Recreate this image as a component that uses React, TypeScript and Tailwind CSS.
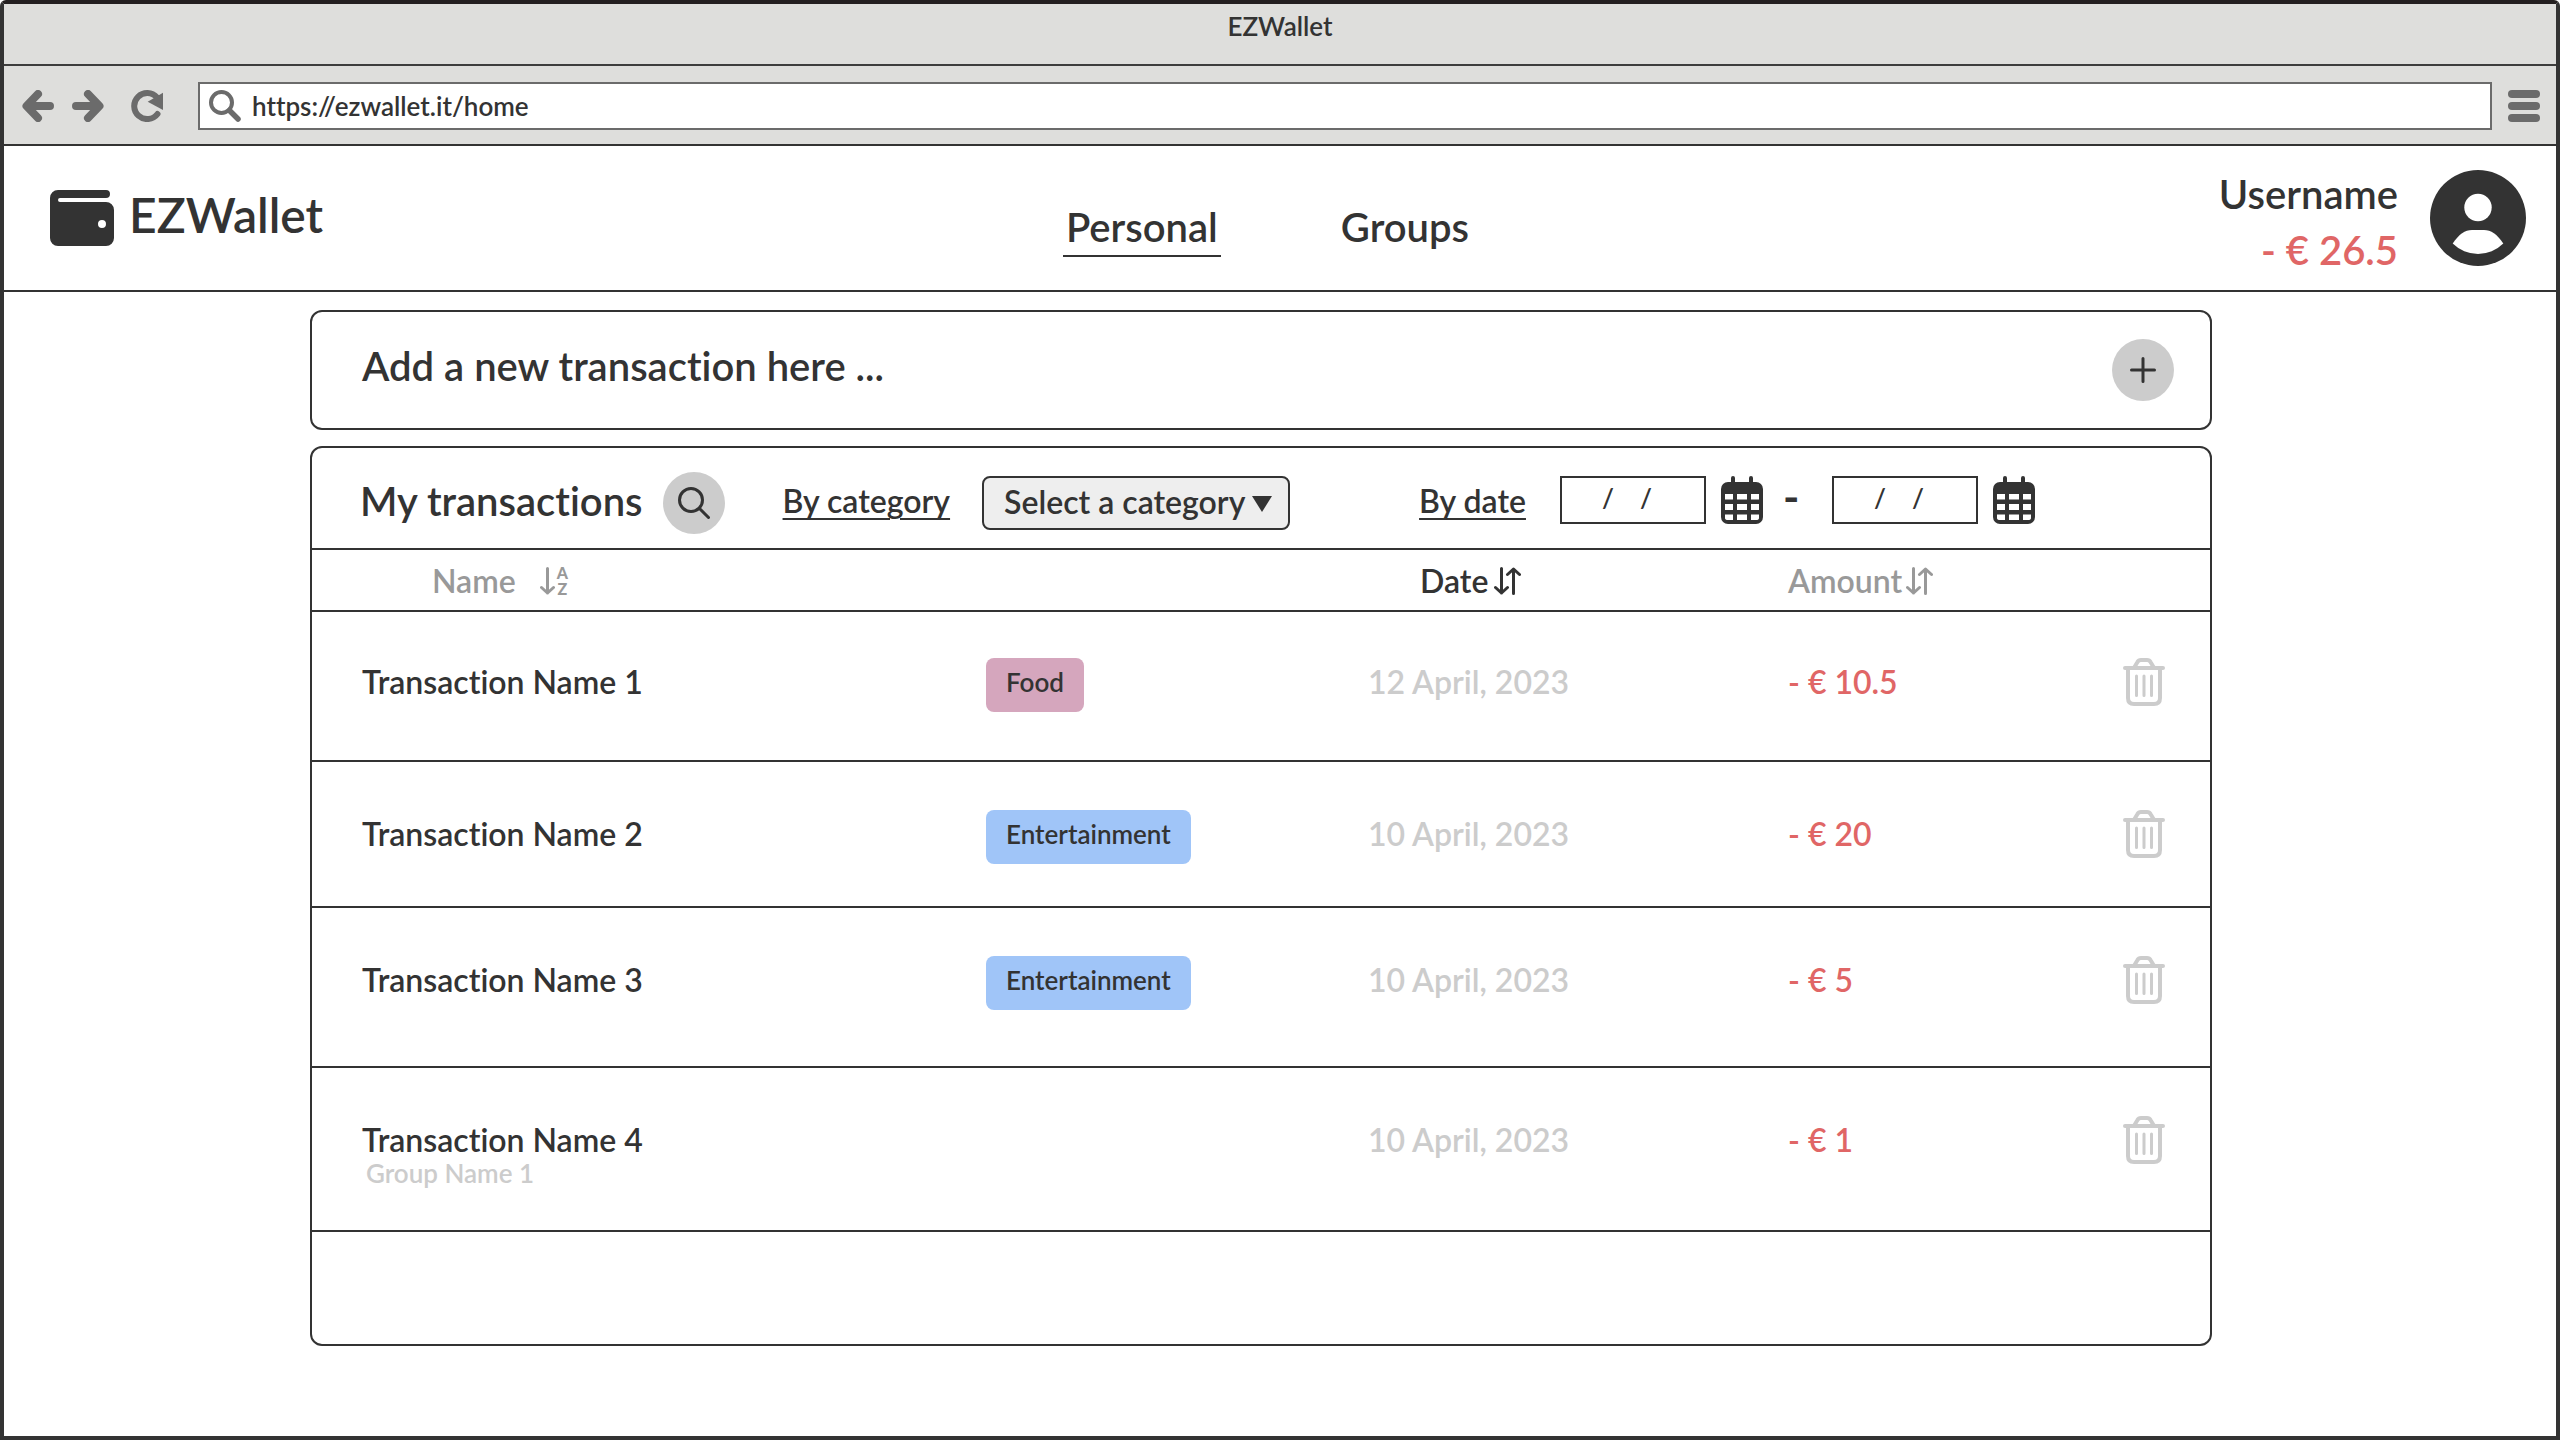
import React from 'react';

type Transaction = {
  name: string;
  group?: string;
  category?: string;
  tone?: string;
  date: string;
  amount: string;
  cell: string;
};

const transactions: Transaction[] = [
  { name: 'Transaction Name 1', category: 'Food', tone: 'bg-[#d5a6bd]', date: '12 April, 2023', amount: '- € 10.5', cell: 'h-[150px] pt-[46px]' },
  { name: 'Transaction Name 2', category: 'Entertainment', tone: 'bg-[#a0c5f8]', date: '10 April, 2023', amount: '- € 20', cell: 'h-[146px] pt-12' },
  { name: 'Transaction Name 3', category: 'Entertainment', tone: 'bg-[#a0c5f8]', date: '10 April, 2023', amount: '- € 5', cell: 'h-[160px] pt-12' },
  { name: 'Transaction Name 4', group: 'Group Name 1', date: '10 April, 2023', amount: '- € 1', cell: 'h-[164px] pt-12' },
];

function BackIcon() {
  return (
    <svg className="size-8" viewBox="0 0 32 32" fill="none" stroke="currentColor" strokeWidth="8" strokeLinecap="round" strokeLinejoin="round" aria-hidden="true">
      <path d="M5 16H28M16 4 4.500 16 16 28" />
    </svg>
  );
}

function ForwardIcon() {
  return (
    <svg className="size-8" viewBox="0 0 32 32" fill="none" stroke="currentColor" strokeWidth="8" strokeLinecap="round" strokeLinejoin="round" aria-hidden="true">
      <path d="M4 16H27M16 4 27.500 16 16 28" />
    </svg>
  );
}

function ReloadIcon() {
  return (
    <svg className="size-8" viewBox="0 0 32 32" aria-hidden="true">
      <path d="M26 7.500A13 13 0 1 0 26.500 24" fill="none" stroke="currentColor" strokeWidth="6" strokeLinecap="round" />
      <path d="M32 2.700V20L16.700 11.700Z" fill="currentColor" />
    </svg>
  );
}

function AddressSearchIcon() {
  return (
    <svg className="size-8 shrink-0 text-[#6b6b6b]" viewBox="0 0 32 32" fill="none" stroke="currentColor" strokeLinecap="round" aria-hidden="true">
      <circle cx="12.500" cy="12.500" r="10.500" strokeWidth="4" />
      <path d="M20.500 20.500 29 29" strokeWidth="5.500" />
    </svg>
  );
}

function MenuIcon() {
  return (
    <svg className="size-8" viewBox="0 0 32 32" fill="currentColor" aria-hidden="true">
      <rect width="32" height="8" rx="4" />
      <rect y="12" width="32" height="8" rx="4" />
      <rect y="24" width="32" height="8" rx="4" />
    </svg>
  );
}

function WalletIcon() {
  return (
    <svg className="h-14 w-16" viewBox="0 0 64 56" fill="currentColor" fillRule="evenodd" aria-hidden="true">
      <path d="M8 0H56a4 4 0 0 1 0 8H10a2 2 0 0 0 0 4H56a8 8 0 0 1 8 8V48a8 8 0 0 1-8 8H8a8 8 0 0 1-8-8V8a8 8 0 0 1 8-8ZM52 30a4 4 0 1 0 0 8 4 4 0 0 0 0-8Z" />
    </svg>
  );
}

function AvatarIcon() {
  return (
    <svg className="size-24" viewBox="0 0 96 96" aria-hidden="true">
      <circle cx="48" cy="48" r="48" fill="#333333" />
      <circle cx="48" cy="37.500" r="13.700" fill="white" />
      <path d="M22.700 73.500C29 64 35 60 42 60H54C61 60 67 64 73.300 73.500A36 36 0 0 1 22.700 73.500Z" fill="white" />
    </svg>
  );
}

function PlusIcon() {
  return (
    <svg className="size-[26px]" viewBox="0 0 26 26" stroke="currentColor" strokeWidth="3" strokeLinecap="round" aria-hidden="true">
      <path d="M13 1.500V24.500M1.500 13H24.500" />
    </svg>
  );
}

function SearchIcon() {
  return (
    <svg className="size-8" viewBox="0 0 32 32" fill="none" stroke="currentColor" strokeWidth="3" strokeLinecap="round" aria-hidden="true">
      <circle cx="13" cy="13" r="11.500" />
      <path d="M21.500 21.500 30.500 30.500" />
    </svg>
  );
}

function CalendarIcon() {
  return (
    <svg className="h-12 w-[42px]" viewBox="0 0 42 48" aria-hidden="true">
      <path d="M12 2V10M30 2V10" stroke="currentColor" strokeWidth="4" strokeLinecap="round" />
      <rect y="6" width="42" height="42" rx="7" fill="currentColor" />
      <path
        d="M4 18h8v5.500H4zM16 18h10v5.500H16zM30 18h8v5.500h-8zM4 28h8v6H4zM16 28h10v6H16zM30 28h8v6h-8zM4 38.500h8v5.500H7q-3 0-3-2zM16 38.500h10v5.500H16zM30 38.500h8v3.500q0 2-3 2h-5z"
        fill="white"
      />
    </svg>
  );
}

function SortIcon() {
  return (
    <svg className="h-7 w-[27px]" viewBox="0 0 27 28" fill="none" stroke="currentColor" strokeWidth="3" strokeLinecap="round" strokeLinejoin="round" aria-hidden="true">
      <path d="M7.500 1.500V26M1.500 20.500 7.500 26 13.500 20.500M19.500 26.500V2M13.500 7.500 19.500 2 25.500 7.500" />
    </svg>
  );
}

function SortAlphaIcon() {
  return (
    <span className="flex items-center gap-0.5" aria-hidden="true">
      <svg className="h-7 w-[15px]" viewBox="0 0 15 28" fill="none" stroke="currentColor" strokeWidth="3" strokeLinecap="round" strokeLinejoin="round">
        <path d="M7.500 1.500V26M1.500 20.500 7.500 26 13.500 20.500" />
      </svg>
      <span className="flex flex-col items-center text-base leading-4 font-black">
        <span>A</span>
        <span>Z</span>
      </span>
    </span>
  );
}

function TrashIcon() {
  return (
    <svg className="h-12 w-[42px]" viewBox="0 0 42 48" fill="none" stroke="currentColor" strokeWidth="4" strokeLinecap="round" strokeLinejoin="round" aria-hidden="true">
      <path d="M2 10H40M11.500 9 14.500 4Q15.500 2 18 2H24Q26.500 2 27.500 4L30.500 9M5 10V40Q5 46 11 46H31Q37 46 37 40V10" />
      <path d="M13.500 18V37.500M21 18V37.500M28.500 18V37.500" strokeWidth="3" />
    </svg>
  );
}

function DateField({ id, label }: { id: string; label: string }) {
  return (
    <div className="flex items-center gap-[15px]">
      <input
        id={id}
        type="text"
        aria-label={label}
        defaultValue="/    /"
        className="h-12 w-[146px] border-2 border-[#333333] bg-white pr-3 pb-1 text-center text-[26px] outline-none"
      />
      <button type="button" aria-label={`Choose ${label}`}>
        <CalendarIcon />
      </button>
    </div>
  );
}

function BrowserBar() {
  return (
    <div className="bg-[#dededc]">
      <div className="h-[62px] border-b-2 border-[#3d3d3d] pt-1.5 text-center text-[26px] leading-8">EZWallet</div>
      <div className="flex h-20 items-center border-b-2 border-[#333333] pt-0.5 pr-4 pl-[18px] text-[#6b6b6b]">
        <button type="button" aria-label="Back"><BackIcon /></button>
        <button type="button" aria-label="Forward" className="ml-[18px]"><ForwardIcon /></button>
        <button type="button" aria-label="Reload" className="ml-[27px]"><ReloadIcon /></button>
        <div className="mr-4 ml-[35px] flex h-12 flex-1 items-center gap-[11px] border-2 border-[#6b6b6b] bg-white pl-[9px]">
          <AddressSearchIcon />
          <input
            type="text"
            aria-label="Address"
            defaultValue="https://ezwallet.it/home"
            className="min-w-0 flex-1 bg-transparent text-[26px] leading-8 text-[#333333] outline-none"
          />
        </div>
        <button type="button" aria-label="Menu"><MenuIcon /></button>
      </div>
    </div>
  );
}

function SiteHeader() {
  return (
    <header className="grid h-[146px] grid-cols-[1fr_auto_1fr] items-center border-b-2 border-[#333333] pr-[30px] pl-[46px]">
      <div className="flex items-center gap-[15px]">
        <WalletIcon />
        <h1 className="pb-1.5 text-5xl">EZWallet</h1>
      </div>
      <nav className="mr-11 flex gap-[120px] pt-6 text-[40px] leading-12">
        <a href="#personal" aria-current="page" className="border-b-2 border-[#333333] px-[3px] pb-1">Personal</a>
        <a href="#groups" className="border-b-2 border-transparent pb-1">Groups</a>
      </nav>
      <div className="flex items-center justify-end gap-8">
        <div className="pt-2 text-right text-[40px] leading-14">
          <p>Username</p>
          <p className="text-[#e06666]">- € 26.5</p>
        </div>
        <button type="button" aria-label="Account"><AvatarIcon /></button>
      </div>
    </header>
  );
}

function FilterBar() {
  return (
    <div className="flex h-[102px] items-center border-b-2 border-[#333333] pt-2.5 pl-12">
      <h2 className="pb-1 text-[40px] leading-12">My transactions</h2>
      <button type="button" aria-label="Search" className="ml-5 flex size-[62px] items-center justify-center rounded-full bg-[#cccccc]">
        <SearchIcon />
      </button>
      <label htmlFor="category" className="ml-[58px] pb-1 text-[32px] underline decoration-2 underline-offset-[5px]">By category</label>
      <div className="relative ml-8">
        <select
          id="category"
          defaultValue="all"
          className="h-[54px] w-[308px] appearance-none rounded-lg border-2 border-[#333333] bg-[#eeeeee] pb-1 pl-5 text-[32px] outline-none"
        >
          <option value="all">Select a category</option>
          <option value="food">Food</option>
          <option value="entertainment">Entertainment</option>
        </select>
        <svg className="pointer-events-none absolute top-5 right-[18px] h-4 w-5" viewBox="0 0 20 16" fill="currentColor" aria-hidden="true">
          <path d="M0 0H20L10 16Z" />
        </svg>
      </div>
      <label htmlFor="from" className="ml-[129px] pb-1 text-[32px] underline decoration-2 underline-offset-[5px]">By date</label>
      <div className="ml-[34px] flex items-center pb-1.5">
        <DateField id="from" label="start date" />
        <span className="mx-5 w-[29px] pb-2 text-[44px] leading-9 font-bold">-</span>
        <DateField id="to" label="end date" />
      </div>
    </div>
  );
}

function TransactionTable() {
  return (
    <table className="w-full table-fixed border-separate border-spacing-0 text-left text-[32px]">
      <colgroup>
        <col />
        <col className="w-[380px]" />
        <col className="w-[420px]" />
        <col className="w-[334px]" />
        <col className="w-[90px]" />
      </colgroup>
      <thead>
        <tr className="leading-10">
          <th scope="col" className="h-[62px] border-b-2 border-[#333333] p-0 pt-0.5 pl-[120px] font-semibold text-[#999999]">
            <button type="button" className="flex items-center gap-6">Name<SortAlphaIcon /></button>
          </th>
          <th scope="col" aria-label="Category" className="border-b-2 border-[#333333] p-0" />
          <th scope="col" className="border-b-2 border-[#333333] p-0 pt-0.5 pl-[54px] font-semibold">
            <button type="button" className="flex items-center gap-1.5">Date<SortIcon /></button>
          </th>
          <th scope="col" className="border-b-2 border-[#333333] p-0 pt-0.5 pl-0.5 font-semibold text-[#999999]">
            <button type="button" className="flex items-center gap-1">Amount<SortIcon /></button>
          </th>
          <th scope="col" aria-label="Actions" className="border-b-2 border-[#333333] p-0" />
        </tr>
      </thead>
      <tbody>
        {transactions.map((t) => (
          <tr key={t.name} className="align-top leading-12">
            <td className={`border-b-2 border-[#333333] pl-[50px] ${t.cell}`}>
              <p>{t.name}</p>
              {t.group && <p className="pl-1 text-[26px] leading-[18px] text-[#cccccc]">{t.group}</p>}
            </td>
            <td className={`border-b-2 border-[#333333] ${t.cell}`}>
              {t.category && (
                <span className={`flex h-[54px] w-fit items-center rounded-lg px-5 pb-1.5 text-[26px] ${t.tone}`}>{t.category}</span>
              )}
            </td>
            <td className={`border-b-2 border-[#333333] pl-0.5 text-[#cccccc] ${t.cell}`}>{t.date}</td>
            <td className={`border-b-2 border-[#333333] pl-0.5 text-[#e06666] ${t.cell}`}>{t.amount}</td>
            <td className={`border-b-2 border-[#333333] pl-[3px] text-[#cccccc] ${t.cell}`}>
              <button type="button" aria-label={`Delete ${t.name}`} className="block">
                <TrashIcon />
              </button>
            </td>
          </tr>
        ))}
      </tbody>
    </table>
  );
}

export default function App() {
  return (
    <div className="min-h-screen rounded-t-md border-4 border-[#333333] border-t-[#231f20] bg-white font-['Lato',sans-serif] font-semibold text-[#333333] [font-variant-ligatures:none]">
      <BrowserBar />
      <SiteHeader />
      <main className="flex flex-col gap-4 pt-[18px] pr-[344px] pl-[306px]">
        <section className="flex h-[120px] items-center justify-between rounded-xl border-2 border-[#333333] pr-9 pl-[50px]">
          <p className="pb-2 text-[40px]">Add a new transaction here ...</p>
          <button type="button" aria-label="Add transaction" className="flex size-[62px] items-center justify-center rounded-full bg-[#cccccc]">
            <PlusIcon />
          </button>
        </section>
        <section className="rounded-xl border-2 border-[#333333] pb-28">
          <FilterBar />
          <TransactionTable />
        </section>
      </main>
    </div>
  );
}
